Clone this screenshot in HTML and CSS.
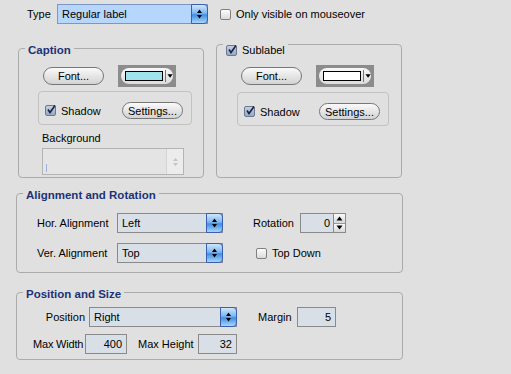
FILE: index.html
```html
<html>
    <head>
        <title>Label settings</title>
        <link rel="stylesheet" href="styles.css">
    </head>
    <body>
        <div class="panel">
            <div class="top-row">
                <span class="type-lbl">Type</span>
                <div class="popup popup-hot type-popup">
                    <span class="popup-text">Regular label</span>
                    <span class="popup-arrows"><svg width="7" height="12" viewBox="0 0 7 12"><path d="M3.5 1.5L6 5H1Z M3.5 10.5L6 7H1Z" fill="#000"/></svg></span>
                </div>
                <label class="check only-check"><span class="box"></span>Only visible on mouseover</label>
            </div>

            <div class="groups">
                <div class="group caption">
                    <div class="group-title">Caption</div>
                    <div class="well-row">
                        <button type="button" class="btn font-btn">Font...</button>
                        <div class="colorwell">
                            <div class="well-inner">
                                <span class="swatch cyan"></span>
                                <span class="well-sep"></span>
                                <svg width="7" height="4" viewBox="0 0 7 4"><path d="M0.5 0H6.5L3.5 4Z" fill="#000"/></svg>
                            </div>
                        </div>
                    </div>
                    <div class="subbox">
                        <label class="check"><span class="box on"><svg width="10" height="10" viewBox="0 0 10 10"><path d="M2 4.5L4 7.5L9 0.5" fill="none" stroke="#18243f" stroke-width="1.6"/></svg></span>Shadow</label>
                        <button type="button" class="btn settings-btn">Settings...</button>
                    </div>
                    <div class="bg-lbl">Background</div>
                    <div class="combo-off">
                        <span class="caret"></span>
                        <span class="combo-arrows"><svg width="7" height="12" viewBox="0 0 7 12"><path d="M3.5 2L6 5H1Z M3.5 10L6 7H1Z" fill="#c4c4c4"/></svg></span>
                    </div>
                </div>

                <div class="group sublabel">
                    <div class="group-title plain">
                        <label class="check"><span class="box on"><svg width="10" height="10" viewBox="0 0 10 10"><path d="M2 4.5L4 7.5L9 0.5" fill="none" stroke="#18243f" stroke-width="1.6"/></svg></span>Sublabel</label>
                    </div>
                    <div class="well-row">
                        <button type="button" class="btn font-btn">Font...</button>
                        <div class="colorwell">
                            <div class="well-inner">
                                <span class="swatch white"></span>
                                <span class="well-sep"></span>
                                <svg width="7" height="4" viewBox="0 0 7 4"><path d="M0.5 0H6.5L3.5 4Z" fill="#000"/></svg>
                            </div>
                        </div>
                    </div>
                    <div class="subbox">
                        <label class="check"><span class="box on"><svg width="10" height="10" viewBox="0 0 10 10"><path d="M2 4.5L4 7.5L9 0.5" fill="none" stroke="#18243f" stroke-width="1.6"/></svg></span>Shadow</label>
                        <button type="button" class="btn settings-btn">Settings...</button>
                    </div>
                </div>
            </div>

            <div class="group wide align">
                <div class="group-title">Alignment and Rotation</div>
                <div class="form-row first">
                    <span class="row-lbl">Hor. Alignment</span>
                    <div class="popup align-popup">
                        <span class="popup-text">Left</span>
                        <span class="popup-arrows"><svg width="7" height="12" viewBox="0 0 7 12"><path d="M3.5 1.5L6 5H1Z M3.5 10.5L6 7H1Z" fill="#000"/></svg></span>
                    </div>
                    <span class="rot-lbl">Rotation</span>
                    <div class="spinner">
                        <span class="spin-field">0</span>
                        <span class="spin-btns">
                            <span class="spin-btn"><svg width="7" height="5" viewBox="0 0 7 5"><path d="M3.5 0.5L6.5 4.5H0.5Z" fill="#000"/></svg></span>
                            <span class="spin-btn"><svg width="7" height="5" viewBox="0 0 7 5"><path d="M3.5 4.5L6.5 0.5H0.5Z" fill="#000"/></svg></span>
                        </span>
                    </div>
                </div>
                <div class="form-row">
                    <span class="row-lbl">Ver. Alignment</span>
                    <div class="popup align-popup">
                        <span class="popup-text">Top</span>
                        <span class="popup-arrows"><svg width="7" height="12" viewBox="0 0 7 12"><path d="M3.5 1.5L6 5H1Z M3.5 10.5L6 7H1Z" fill="#000"/></svg></span>
                    </div>
                    <label class="check topdown-check"><span class="box"></span>Top Down</label>
                </div>
            </div>

            <div class="group wide pos">
                <div class="group-title">Position and Size</div>
                <div class="form-row first">
                    <span class="pos-lbl">Position</span>
                    <div class="popup pos-popup">
                        <span class="popup-text">Right</span>
                        <span class="popup-arrows"><svg width="7" height="12" viewBox="0 0 7 12"><path d="M3.5 1.5L6 5H1Z M3.5 10.5L6 7H1Z" fill="#000"/></svg></span>
                    </div>
                    <span class="margin-lbl">Margin</span>
                    <span class="field margin-field">5</span>
                </div>
                <div class="form-row">
                    <span class="maxw-lbl">Max Width</span>
                    <span class="field maxw-field">400</span>
                    <span class="maxh-lbl">Max Height</span>
                    <span class="field maxh-field">32</span>
                </div>
            </div>
        </div>
    </body>
</html>
```

FILE: styles.css
```css
body {
    margin: 0;
    background-color: #e0e0e0;
    font-family: "Liberation Sans", Arial, sans-serif;
    font-size: 11px;
    color: #000;
}

.panel {
    width: 511px;
    height: 374px;
    padding-top: 4px;
    box-sizing: border-box;
}

/* top line */
.top-row {
    display: flex;
    align-items: center;
    height: 20px;
    padding-left: 27px;
}

.type-lbl {
    width: 30px;
}

.only-check {
    margin-left: 12px;
}

/* popups */
.popup {
    display: flex;
    height: 20px;
    box-sizing: border-box;
    border: 1px solid #8a8a8a;
    background-color: #d8dfe7;
}

.popup-hot {
    background-color: #b7d6fc;
    border-color: #7d96c4;
}

.popup-text {
    flex: 1;
    line-height: 18px;
    padding-left: 4px;
}

.popup-arrows {
    width: 15px;
    margin: -1px -1px -1px 0;
    display: flex;
    align-items: center;
    justify-content: center;
    border: 1px solid #3a5fae;
    border-radius: 0 4px 4px 0;
    background: linear-gradient(#cfe6fd, #7db6f0 45%, #3f8ee6 55%, #a8d6fc);
}

.type-popup {
    width: 151px;
}

.align-popup {
    width: 106px;
}

.pos-popup {
    width: 148px;
}

/* checkboxes */
.check {
    display: flex;
    align-items: center;
}

.box {
    width: 11px;
    height: 11px;
    box-sizing: border-box;
    border: 1px solid #808080;
    border-radius: 2px;
    background: linear-gradient(#fdfdfd, #dadada);
    margin-right: 5px;
    position: relative;
}

.box.on {
    background: linear-gradient(#c3cfe2, #97a9c6);
    border-color: #6a7891;
}

.box svg {
    position: absolute;
    left: 0;
    top: -1px;
}

/* groups */
.groups {
    display: flex;
    align-items: flex-end;
    padding-left: 18px;
    margin-top: 20px;
}

.group {
    box-sizing: border-box;
    border: 1px solid #ababab;
    border-radius: 4px;
}

.group-title {
    width: max-content;
    margin: -5px 0 0 6px;
    padding: 0 3px;
    background-color: #e0e0e0;
    line-height: 13px;
    font-size: 11.5px;
    font-weight: bold;
    color: #1d3276;
}

.group-title.plain {
    margin-top: -1px;
    font-size: 11px;
    font-weight: normal;
    color: #000;
}

.caption {
    width: 186px;
    height: 130px;
}

.sublabel {
    width: 186px;
    height: 134px;
    margin-left: 12px;
}

.well-row {
    display: flex;
    align-items: center;
    height: 22px;
    margin-top: 8px;
    padding-left: 24px;
}

.btn {
    font-family: inherit;
    font-size: 11px;
    color: #000;
    height: 18px;
    padding: 0;
    border: 1px solid #777;
    border-radius: 9px;
    background: linear-gradient(#fafafa, #e4e4e4 55%, #d3d3d3);
}

.font-btn {
    width: 61px;
}

.settings-btn {
    width: 61px;
    height: 17px;
}

.colorwell {
    width: 58px;
    height: 22px;
    margin-left: 14px;
    background-color: #8c8c8c;
    padding: 3px;
    box-sizing: border-box;
}

.well-inner {
    height: 16px;
    display: flex;
    align-items: center;
    border-radius: 8px;
    background: linear-gradient(#f8f8f8, #dcdcdc);
    padding-left: 4px;
}

.swatch {
    width: 43px;
    height: 10px;
    box-sizing: border-box;
    border: 1px solid #000;
}

.swatch.cyan {
    background-color: #9fe3ec;
}

.swatch.white {
    background-color: #fff;
}

.well-sep {
    width: 1px;
    height: 12px;
    background-color: #777;
    margin: 0 1px 0 2px;
}

.subbox {
    display: flex;
    align-items: center;
    justify-content: space-between;
    width: 154px;
    height: 34px;
    box-sizing: border-box;
    margin: 4px 0 0 19px;
    padding: 5px 8px 0 6px;
    border: 1px solid #c2c2c2;
    border-radius: 4px;
}

.sublabel .subbox {
    width: 152px;
    margin: 5px 0 0 20px;
}

.bg-lbl {
    margin: 7px 0 0 23px;
    line-height: 13px;
}

.combo-off {
    display: flex;
    width: 142px;
    height: 27px;
    box-sizing: border-box;
    margin: 3px 0 0 23px;
    border: 1px solid #b4b4b4;
    background-color: #e4e4e4;
}

.caret {
    width: 1px;
    height: 8px;
    margin: 15px 0 0 3px;
    background-color: #9fb3d8;
}

.combo-arrows {
    margin-left: auto;
    width: 16px;
    display: flex;
    align-items: center;
    justify-content: center;
    background-color: #ececec;
    border-left: 1px solid #d4d4d4;
}

/* wide groups */
.wide {
    width: 387px;
    margin-left: 16px;
}

.align {
    height: 80px;
    margin-top: 15px;
}

.pos {
    height: 68px;
    margin-top: 19px;
}

.form-row {
    display: flex;
    align-items: center;
    height: 20px;
}

.align .form-row {
    padding-left: 20px;
    margin-top: 10px;
}

.align .form-row.first {
    margin-top: 11px;
}

.row-lbl {
    width: 80px;
}

.rot-lbl {
    width: 47px;
    margin-left: 30px;
}

.topdown-check {
    margin-left: 33px;
}

.spinner {
    display: flex;
    height: 20px;
}

.spin-field {
    width: 34px;
    box-sizing: border-box;
    border: 1px solid #8a8a8a;
    background-color: #d8dfe7;
    text-align: right;
    padding-right: 3px;
    line-height: 18px;
}

.spin-btns {
    display: flex;
    flex-direction: column;
    width: 11px;
    border: 1px solid #8a8a8a;
    border-left: none;
}

.spin-btn {
    flex: 1;
    display: flex;
    align-items: center;
    justify-content: center;
    background: linear-gradient(#fafafa, #d8d8d8);
    border-bottom: 1px solid #9a9a9a;
}

.spin-btn:last-child {
    border-bottom: none;
}

.field {
    height: 20px;
    box-sizing: border-box;
    border: 1px solid #8a8a8a;
    background-color: #d8dfe7;
    text-align: right;
    padding-right: 4px;
    line-height: 18px;
}

.pos .form-row {
    padding-left: 16px;
    margin-top: 7px;
}

.pos .form-row.first {
    margin-top: 6px;
}

.pos-lbl {
    width: 52px;
    text-align: right;
    margin-right: 4px;
}

.margin-lbl {
    width: 39px;
    margin-left: 21px;
}

.margin-field {
    width: 39px;
}

.maxw-lbl {
    width: 52px;
    letter-spacing: -0.2px;
}

.maxw-field {
    width: 42px;
}

.maxh-lbl {
    width: 60px;
    margin-left: 11px;
}

.maxh-field {
    width: 39px;
}
```
